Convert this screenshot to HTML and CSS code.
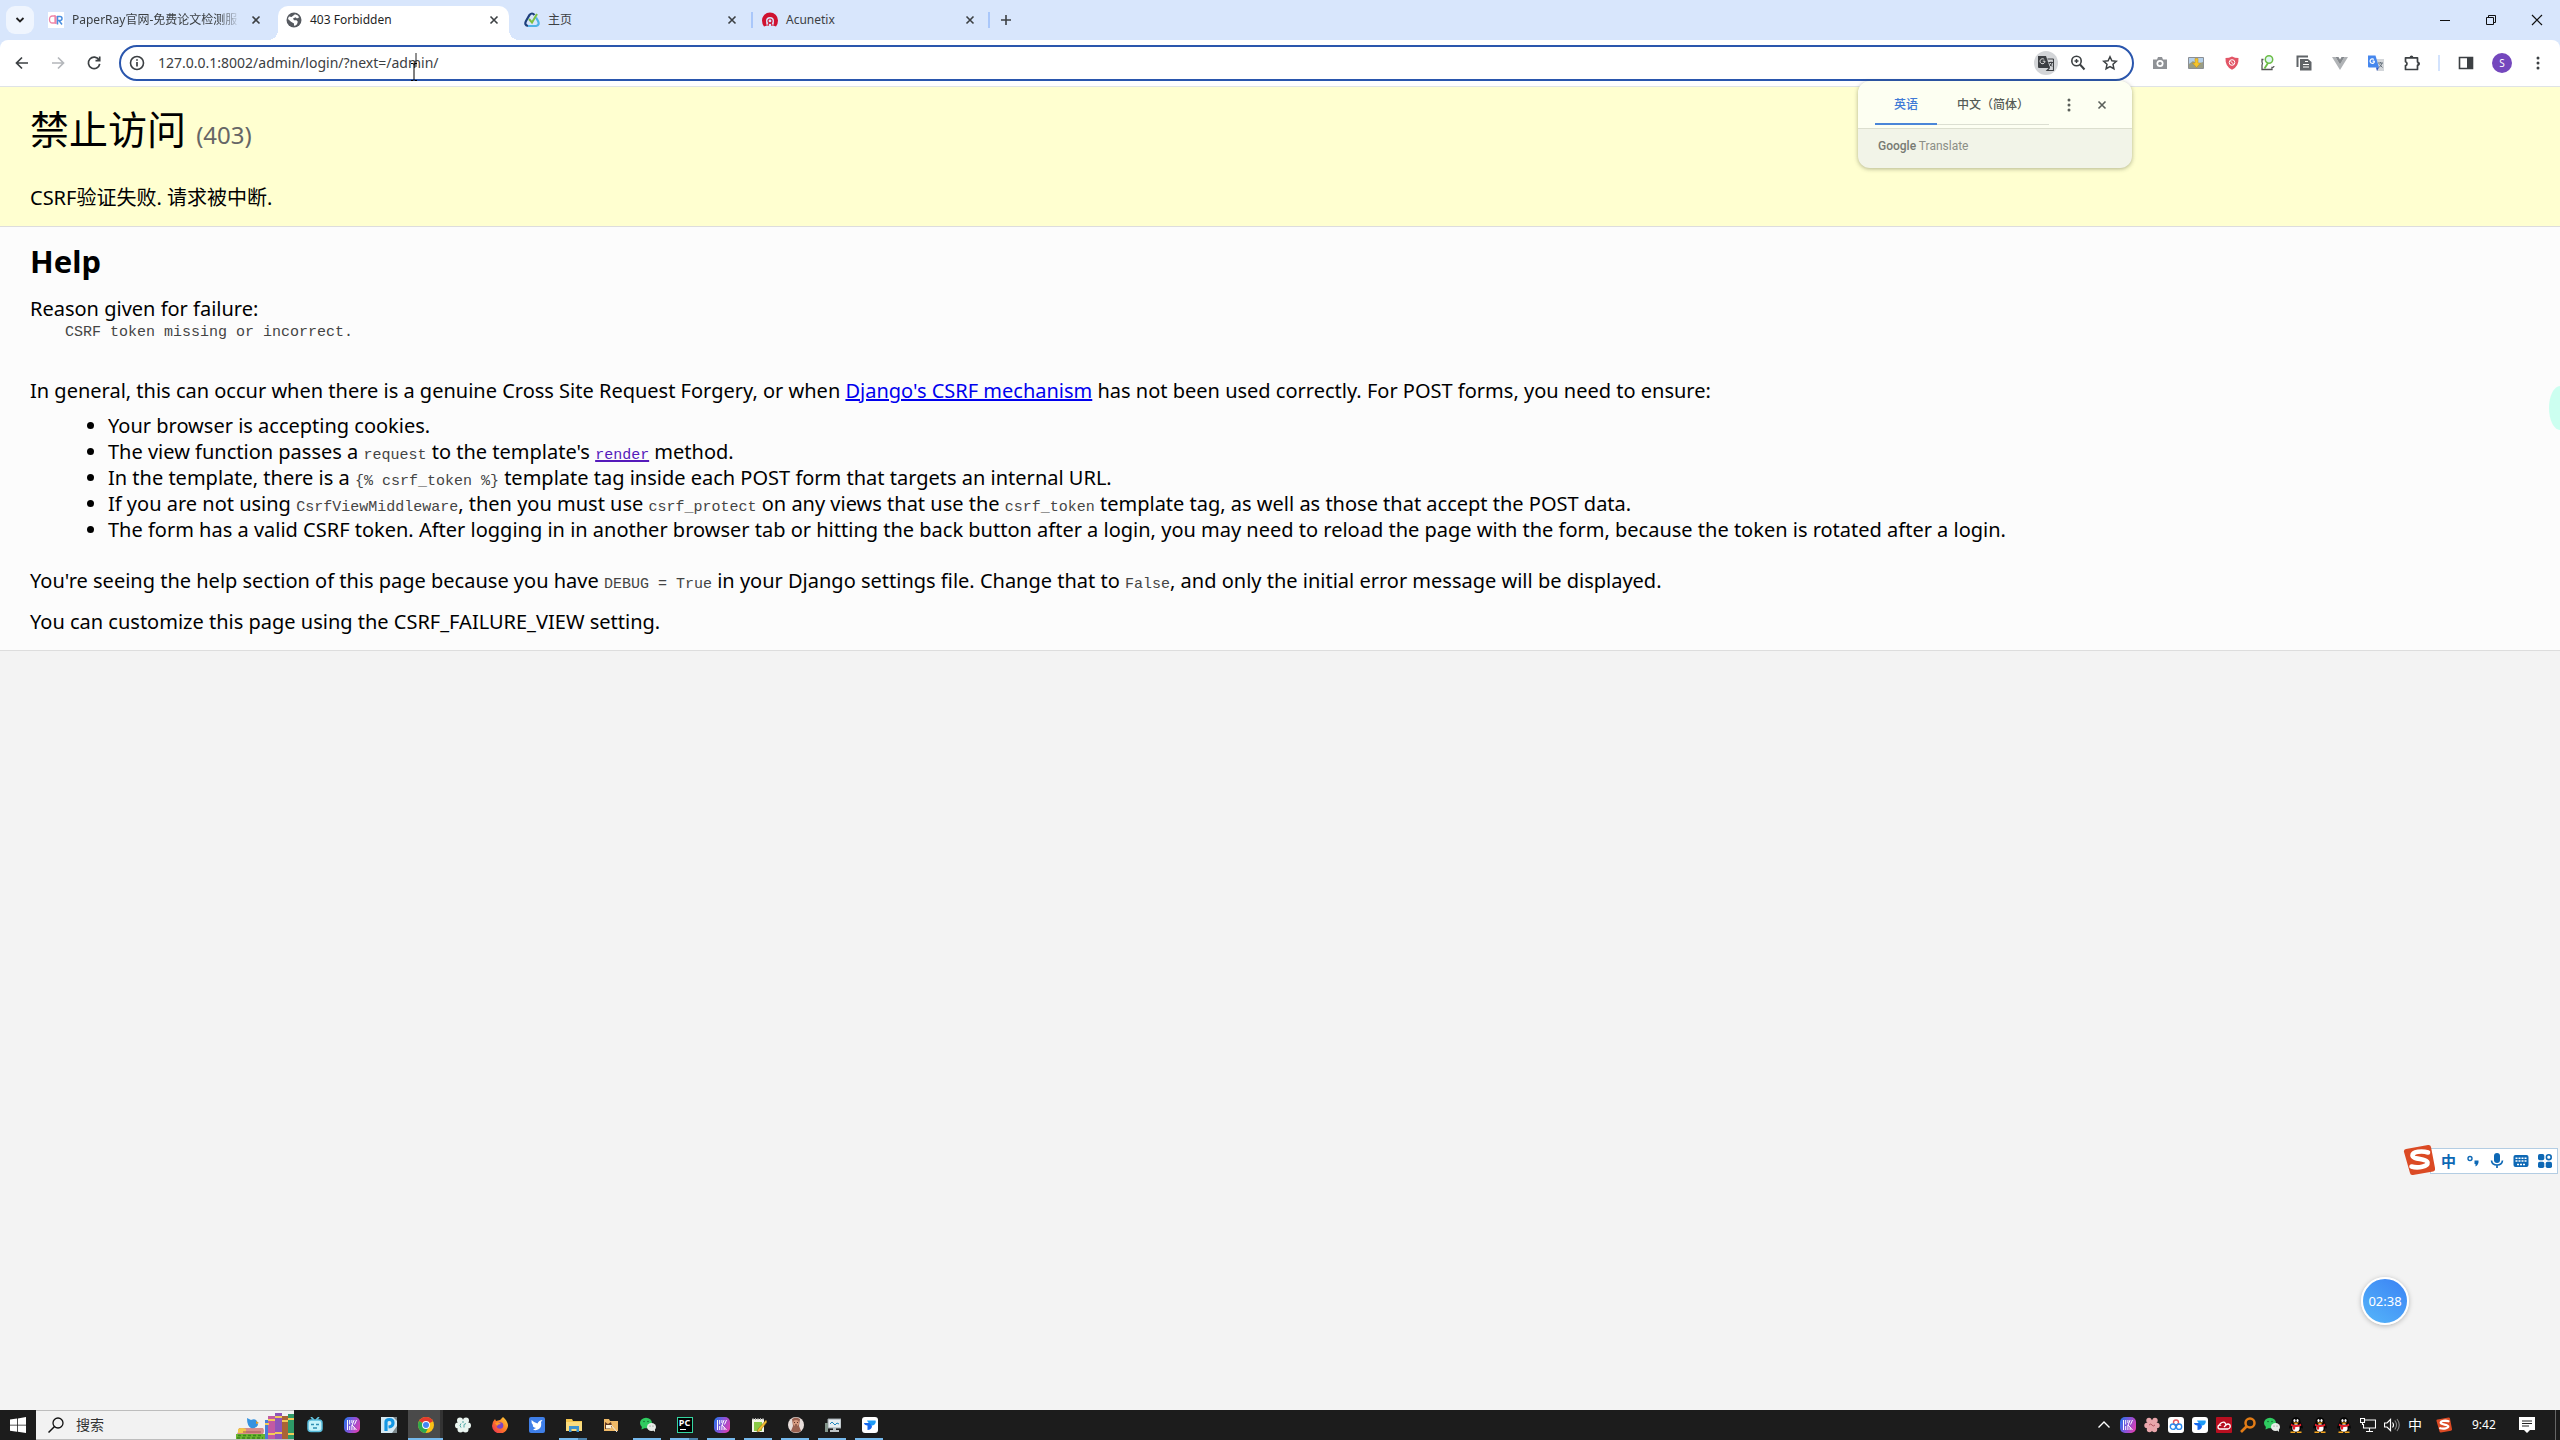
FILE: index.html
```html
<!DOCTYPE html>
<html lang="zh-CN">
<head>
<meta charset="utf-8">
<title>403 Forbidden</title>
<link rel="stylesheet" href="styles.css">
</head>
<body>
<svg class="defs" width="0" height="0" aria-hidden="true">
  <defs>
    <linearGradient id="violet" x1="0" y1=".3" x2="1" y2=".7"><stop offset="0" stop-color="#2f6fe8"/><stop offset=".5" stop-color="#8a52d8"/><stop offset="1" stop-color="#e03fb0"/></linearGradient>
    <linearGradient id="fire" x1="1" y1="0" x2="0" y2="1"><stop offset="0" stop-color="#ffd93b"/><stop offset=".5" stop-color="#ff7a26"/><stop offset="1" stop-color="#e8265a"/></linearGradient>
  </defs>
  <symbol id="i-close" viewBox="0 0 16 16"><path d="M4.500 4.500l7 7M11.500 4.500l-7 7" stroke="currentColor" stroke-width="1.600" fill="none"/></symbol>
  <symbol id="i-dots" viewBox="0 0 16 16"><circle cx="8" cy="3" r="1.500"/><circle cx="8" cy="8" r="1.500"/><circle cx="8" cy="13" r="1.500"/></symbol>
  <symbol id="i-keys" viewBox="0 0 16 16"><rect width="16" height="16" rx="5" fill="url(#violet)"/><path d="M3.500 3v10M5.700 3v4.500M5.700 9v4M7.900 3v3M7.900 8v5M10.100 3l-2 5 4.400 5M12.500 3l-2 4.500M10.100 10.500V13" stroke="#fff" stroke-width="1" fill="none"/></symbol>
  <symbol id="i-wechat" viewBox="0 0 16 16"><ellipse cx="6" cy="6" rx="6" ry="5.200" fill="#2fcb60"/><path d="M2 9l-.5 3.500L5 11z" fill="#2fcb60"/><circle cx="4" cy="4.500" r=".8" fill="#156b33"/><circle cx="8" cy="4.500" r=".8" fill="#156b33"/><ellipse cx="11.500" cy="10" rx="4.500" ry="4" fill="#e8ece8"/><path d="M13 13l2 2v-3z" fill="#e8ece8"/><circle cx="10" cy="9" r=".6" fill="#777"/><circle cx="13" cy="9" r=".6" fill="#777"/></symbol>
  <symbol id="i-todesk" viewBox="0 0 16 16"><rect width="16" height="16" rx="3" fill="#fff"/><path d="M5 3.500h8.500c1 2-1 5-3 5H8c0-2-2-2.500-3-5z" fill="#1d9bf5"/><path d="M2 6h5.500L10 9c0 2.500-2 4-4.500 4V8.500C3.500 8.500 2 7.500 2 6z" fill="#1468f0"/></symbol>
  <symbol id="i-qq" viewBox="0 0 16 16"><path d="M8 0C5 0 3.500 2.200 3.500 5 2.500 7 1 9 1.200 11c.2 1 1 .5 1.500-.4C3 14 5 15.500 8 15.500s5-1.500 5.300-4.900c.5.900 1.300 1.400 1.500.4C15 9 13.500 7 12.500 5c0-2.800-1.500-5-4.500-5z" fill="#050505"/><ellipse cx="8" cy="11" rx="3.600" ry="3.800" fill="#fff"/><ellipse cx="6.500" cy="3.500" rx="1.100" ry="1.500" fill="#fff"/><ellipse cx="9.500" cy="3.500" rx="1.100" ry="1.500" fill="#fff"/><path d="M5 5.500h6L9 7H7z" fill="#f7a51d"/><path d="M3 6.500c3 2 7 2 10 0l.3 2.300c-2 1-4 1.400-6 1.200L7 12.500H5V9.500l-2.200-.8z" fill="#e0202c"/><path d="M2.500 14.500h4.700v1.500H2.500zM8.800 14.500h4.700v1.500H8.800z" fill="#f7a51d"/></symbol>
  <symbol id="i-sogou" viewBox="0 0 32 32"><path d="M3 5L25 1q2.500-.4 3 2l4 21q.5 3-2 3.600L10 31q-2.500.5-3-2L1 8q-.6-2.500 2-3z" fill="#db4a24"/><path d="M25 8.500C19 6.500 9.500 7.500 9.500 11.500s14.500 3 15 7S15 24.500 8.500 22.500" fill="none" stroke="#fff" stroke-width="4.600" stroke-linecap="round"/></symbol>
</svg>

<header class="browser">
  <div class="tabstrip">
    <button class="tab-search" aria-label="搜索标签页"><svg width="12" height="12" viewBox="0 0 12 12"><path d="M2.500 4l3.500 3.500L9.500 4" fill="none" stroke="#222" stroke-width="1.800"/></svg></button>
    <div class="tabs" role="tablist">
      <div class="tab" role="tab">
        <svg class="icon" viewBox="0 0 16 16"><rect width="16" height="16" fill="#fff"/><path d="M7 4H4.500Q1.500 4 1.500 7.500T4.500 11H7V3M8 4v8" fill="none" stroke="#ef86a8" stroke-width="1.300"/><path d="M9 4.500h3q2 0 2 2t-2 2H9.500M11 8.500l3 4M9.500 4v8.500" fill="none" stroke="#4a8fe0" stroke-width="1.500"/></svg>
        <span class="tab-title fade">PaperRay官网-免费论文检测服</span>
        <button class="tab-close" aria-label="关闭"><svg class="icon"><use href="#i-close"/></svg></button>
      </div>
      <div class="tab active" role="tab" aria-selected="true">
        <svg class="icon" viewBox="0 0 16 16"><circle cx="8" cy="8" r="7.500" fill="#565a60"/><path d="M9 2.200q3 .6 4.200 3L11 6.500 9.500 5.200 7 6.500 8 8.200h2.500l1.300 1.500L11 12.200q-1.500 1.500-3 1.600v-2.300L5 9.700 2 7q.3-1.500 1-2.500L5.500 5z" fill="#fff"/></svg>
        <span class="tab-title">403 Forbidden</span>
        <button class="tab-close" aria-label="关闭"><svg class="icon"><use href="#i-close"/></svg></button>
      </div>
      <div class="tab" role="tab">
        <svg class="icon" viewBox="0 0 16 16"><path d="M10.500 3Q8 0 5.500 3L2 9q-2 4 2 5" fill="none" stroke="#1d3f7c" stroke-width="2.200"/><path d="M4 14h8q4-1 2-5l-2-3.500" fill="none" stroke="#4fb3e8" stroke-width="2.200"/><path d="M5 7l3 3.500L13 2" fill="none" stroke="#7cc142" stroke-width="2"/></svg>
        <span class="tab-title">主页</span>
        <button class="tab-close" aria-label="关闭"><svg class="icon"><use href="#i-close"/></svg></button>
      </div>
      <div class="tab ruled" role="tab">
        <svg class="icon" viewBox="0 0 16 16"><path d="M2 14.500Q0 12 0 8.500a8 8 0 0 1 16 0Q16 12 14 14.500L11 13.500q1-1.500 1-4.500a4 4 0 0 0-8 0q0 3 1 4.500z" fill="#cf1230"/><circle cx="8" cy="9" r="2" fill="none" stroke="#cf1230" stroke-width="1.200"/><path d="M6 14q0-3 2-3t2 3" fill="none" stroke="#cf1230" stroke-width="1.200"/></svg>
        <span class="tab-title">Acunetix</span>
        <button class="tab-close" aria-label="关闭"><svg class="icon"><use href="#i-close"/></svg></button>
      </div>
    </div>
    <button class="tab-new" aria-label="新标签页"><svg class="icon" viewBox="0 0 16 16"><path d="M8 3v10M3 8h10" stroke="#3c4043" stroke-width="1.600"/></svg></button>
    <div class="window-buttons">
      <button aria-label="最小化"><svg class="icon" viewBox="0 0 16 16"><path d="M3 8.500h10" stroke="#111"/></svg></button>
      <button aria-label="还原"><svg class="icon" viewBox="0 0 16 16"><path d="M3.500 5.500h7v7h-7zM5.500 5.500v-2h7v7h-2" fill="none" stroke="#111"/></svg></button>
      <button aria-label="关闭窗口"><svg class="icon" viewBox="0 0 16 16"><path d="M3 3l10 10M13 3L3 13" stroke="#111" stroke-width="1.200"/></svg></button>
    </div>
  </div>

  <div class="toolbar">
    <button class="tool" aria-label="后退"><svg class="icon" viewBox="0 0 16 16"><path d="M14 8H2.500M8 2.500L2.500 8 8 13.500" fill="none" stroke="#3c4043" stroke-width="1.700"/></svg></button>
    <button class="tool" aria-label="前进"><svg class="icon" viewBox="0 0 16 16"><path d="M2 8h11.500M8 2.500L13.500 8 8 13.500" fill="none" stroke="#b4b7bb" stroke-width="1.700"/></svg></button>
    <button class="tool" aria-label="重新加载"><svg class="icon" viewBox="0 0 16 16"><path d="M13 5a5.700 5.700 0 1 0 .7 3.800M13.700 1.500v4.200H9.500" fill="none" stroke="#3c4043" stroke-width="1.700"/></svg></button>
    <form class="address">
      <button class="chip" type="button" aria-label="网站信息"><svg class="icon" viewBox="0 0 16 16"><circle cx="8" cy="8" r="6.500" fill="none" stroke="#3c4043" stroke-width="1.600"/><path d="M8 7v4.500M8 4.200v1.600" stroke="#3c4043" stroke-width="1.700"/></svg></button>
      <input class="url" type="text" aria-label="地址" value="127.0.0.1:8002/admin/login/?next=/admin/">
      <button class="chip" type="button" aria-label="翻译此页"><span class="disc"><svg class="icon" viewBox="0 0 16 16"><path d="M0 1h8l4 12H1q-1 0-1-1z" fill="#3c3f43"/><path d="M7 6.200H4.800M7 6.200a2.500 2.500 0 1 1-.8-1.800" fill="none" stroke="#ddd" stroke-width="1"/><path d="M9.500 4H15q.5 0 .5.500V15q0 .5-.5.500H9L11.500 13" fill="none" stroke="#3c3f43" stroke-width="1.200"/><path d="M10.500 7.500H15M13 6.500v1M14 7.500Q13.500 10 11.500 11.500M11.500 8.500l2.500 3" fill="none" stroke="#3c3f43"/></svg></span></button>
      <button class="chip" type="button" aria-label="缩放"><svg class="icon" viewBox="0 0 16 16"><circle cx="6.500" cy="6" r="4.700" fill="none" stroke="#3c4043" stroke-width="1.600"/><path d="M10 9.500l4.500 5" stroke="#3c4043" stroke-width="2"/><path d="M6.500 4v4M4.500 6h4" stroke="#3c4043" stroke-width="1.400"/></svg></button>
      <button class="chip" type="button" aria-label="收藏"><svg class="icon" viewBox="0 0 16 16"><path d="M8 1.800l1.900 4 4.400.5-3.300 3 .9 4.400L8 11.500l-3.900 2.200.9-4.400-3.300-3 4.400-.5z" fill="none" stroke="#3c4043" stroke-width="1.500"/></svg></button>
    </form>
    <button class="tool" aria-label="截图"><svg class="icon" viewBox="0 0 16 16"><path d="M1 4.500h4L6 2h4l1 2.500h4V14H1z" fill="#8f9296"/><circle cx="8" cy="8.500" r="3.500" fill="#fff"/><circle cx="8" cy="8.500" r="1.800" fill="#8f9296"/></svg></button>
    <button class="tool" aria-label="图片下载"><svg class="icon" viewBox="0 0 16 16"><path d="M.5 2.500h15v11H.5z" fill="#b5d0ea" stroke="#8b8f94"/><path d="M1 9l4-3 4 3 6-2v6H1z" fill="#9a9d84"/><path d="M7 3.500h3V8h2.500l-4 4.500L4.500 8H7z" fill="#f5c52c" stroke="#c08a10" stroke-width=".5"/></svg></button>
    <button class="tool" aria-label="安全防护"><svg class="icon" viewBox="0 0 16 16"><path d="M8 1.500q3 1.500 6.500 1.500.5 8.500-6.500 11.800Q1 11.500 1.500 3 5 3 8 1.500z" fill="#e25566"/><circle cx="8" cy="7.500" r="2.800" fill="none" stroke="#fff"/><path d="M6.200 5.800l3.600 3.600" stroke="#fff"/></svg></button>
    <button class="tool" aria-label="脚本"><svg class="icon" viewBox="0 0 16 16"><path d="M3.500 4.500H2V7Q3 8.500 2 10v4.500h10v-2q2 0 2-1.500" fill="none" stroke="#555" stroke-width="1.300"/><circle cx="9" cy="4.500" r="3.700" fill="#dff5f2" stroke="#6cbd45" stroke-width="1.500"/><path d="M8 8L4.500 13.500" stroke="#6cbd45" stroke-width="1.800"/></svg></button>
    <button class="tool" aria-label="阅读"><svg class="icon" viewBox="0 0 16 16"><path d="M1.500 12V1.500H12" fill="none" stroke="#606468" stroke-width="2"/><path d="M4 4h8l3.500 3v8.500H4z" fill="#606468"/><path d="M9 6.500h3M7 9.500h6M7 12h6" stroke="#fff"/></svg></button>
    <button class="tool" aria-label="Vue"><svg class="icon" viewBox="0 0 16 16"><path d="M0 2h3.500L8 9.500 12.500 2H16L8 15z" fill="#b0b3b6"/><path d="M3.500 2h3L8 4.500 9.500 2h3L8 9.500z" fill="#85898d"/></svg></button>
    <button class="tool" aria-label="谷歌翻译"><svg class="icon" viewBox="0 0 16 16"><path d="M7 4h9v12H9z" fill="#d3d6da"/><path d="M0 .5h7.500L11 12.500H1q-1 0-1-1z" fill="#4687ee"/><path d="M6.500 6.200H4.600M6.500 6.200a2.200 2.200 0 1 1-.7-1.700" fill="none" stroke="#fff" stroke-width="1.200"/><path d="M10 8h5M12.500 7v1M14 8q-1 3-3 4.500M11.500 9.500l3 3" fill="none" stroke="#67727c"/><path d="M8 12.500h3L9 16z" fill="#2a56c6"/></svg></button>
    <button class="tool" aria-label="扩展程序"><svg class="icon" viewBox="0 0 16 16"><path d="M1.500 2.800h12V7q1.500.2 1.500 1.700t-1.500 1.600v4.200h-12v-3.900q1.500-.5 1.500-1.900T1.500 6.800z" fill="none" stroke="#3c4043" stroke-width="1.700" stroke-linejoin="round"/><path d="M5.500 2.500q.3-2 2-2t2 2zM13.500 7q2.300 0 2.300 1.700t-2.300 1.600z" fill="#3c4043"/></svg></button>
    <span class="rule"></span>
    <button class="tool" aria-label="侧边栏"><svg class="icon" viewBox="0 0 16 16"><path d="M1.500 2.500h13v11h-13z" fill="none" stroke="#3c4043" stroke-width="1.600"/><path d="M9 2h6v12H9z" fill="#3c4043"/></svg></button>
    <button class="tool" aria-label="账户"><span class="avatar">S</span></button>
    <button class="tool" aria-label="菜单"><svg class="icon dark"><use href="#i-dots"/></svg></button>
  </div>
  <svg class="pointer" width="12" height="28" viewBox="0 0 12 28"><path d="M8 0v14" stroke="#222"/><path d="M6 10v16M3 27.500h2l1-1 1 1h2M3 10.500h2l1 1 1-1h2" fill="none" stroke="#000"/></svg>

  <aside class="translate">
    <div class="translate-bar">
      <div class="langs">
        <button class="lang on">英语</button>
        <button class="lang">中文（简体）</button>
      </div>
      <button class="mini" aria-label="选项"><svg class="icon"><use href="#i-dots"/></svg></button>
      <button class="mini" aria-label="关闭"><svg class="icon"><use href="#i-close"/></svg></button>
    </div>
    <p class="brand"><b>Google</b> Translate</p>
  </aside>
</header>

<main class="page">
  <section class="summary">
    <h1>禁止访问 <span>(403)</span></h1>
    <p>CSRF验证失败. 请求被中断.</p>
  </section>
  <section class="info">
    <h2>Help</h2>
    <p>Reason given for failure:</p>
    <pre>CSRF token missing or incorrect.</pre>
    <p>In general, this can occur when there is a genuine Cross Site Request Forgery, or when <a href="#csrf">Django's CSRF mechanism</a> has not been used correctly. For POST forms, you need to ensure:</p>
    <ul>
      <li>Your browser is accepting cookies.</li>
      <li>The view function passes a <code>request</code> to the template's <a class="seen" href="#render"><code>render</code></a> method.</li>
      <li>In the template, there is a <code>{% csrf_token %}</code> template tag inside each POST form that targets an internal URL.</li>
      <li>If you are not using <code>CsrfViewMiddleware</code>, then you must use <code>csrf_protect</code> on any views that use the <code>csrf_token</code> template tag, as well as those that accept the POST data.</li>
      <li>The form has a valid CSRF token. After logging in in another browser tab or hitting the back button after a login, you may need to reload the page with the form, because the token is rotated after a login.</li>
    </ul>
    <p class="debug">You're seeing the help section of this page because you have <code>DEBUG = True</code> in your Django settings file. Change that to <code>False</code>, and only the initial error message will be displayed.</p>
    <p class="custom">You can customize this page using the CSRF_FAILURE_VIEW setting.</p>
  </section>
</main>

<div class="side-bubble"></div>
<div class="ime">
  <svg class="ime-logo" width="32" height="32"><use href="#i-sogou"/></svg>
  <span class="ime-mode">中</span>
  <svg class="icon" viewBox="0 0 16 16"><circle cx="5" cy="5.500" r="2" fill="none" stroke="#0d68b5" stroke-width="1.400"/><path d="M9.500 7.500h4q.5 4-3 6v-2.500h-1z" fill="#0d68b5"/></svg>
  <svg class="icon" viewBox="0 0 16 16"><rect x="5" y="0" width="6" height="10" rx="3" fill="#0d68b5"/><path d="M2.500 7.500q.5 4.500 5.500 4.500t5.500-4.500M8 12v3" fill="none" stroke="#0d68b5" stroke-width="1.700"/></svg>
  <svg class="icon" viewBox="0 0 16 16"><rect x=".5" y="2" width="15" height="12" rx="2" fill="#0d68b5"/><path d="M2.500 5.200h11M2.500 8h11M4 11.500h8" stroke="#fff" stroke-width="1.500" stroke-dasharray="2 1"/></svg>
  <svg class="icon" viewBox="0 0 16 16"><rect x="1" y="1" width="6.300" height="6.300" rx="1.800" fill="#0d68b5"/><rect x="1" y="8.700" width="6.300" height="6.300" rx="1.800" fill="#0d68b5"/><rect x="8.700" y="8.700" width="6.300" height="6.300" rx="1.800" fill="#0d68b5"/><circle cx="11.800" cy="4.200" r="2.400" fill="none" stroke="#0d68b5" stroke-width="1.600"/></svg>
</div>
<div class="timer">02:38</div>

<footer class="taskbar">
  <button class="start" aria-label="开始"><svg class="icon" viewBox="0 0 16 16"><path d="M0 2.500L7 1.500v6.200H0zM7.800 1.400L16 0v7.700H7.800zM0 8.500h7v6.200l-7-1zM7.800 8.500H16V16l-8.200-1.200z" fill="#fff"/></svg></button>
  <label class="search">
    <svg class="icon" viewBox="0 0 16 16"><circle cx="10" cy="6" r="5" fill="none" stroke="#111" stroke-width="1.300"/><path d="M6.500 9.500L.5 15.500" stroke="#111" stroke-width="1.500"/></svg>
    <input type="text" placeholder="搜索">
    <svg class="books" width="58" height="26" viewBox="0 0 58 26"><rect x="0" y="21" width="29" height="5" fill="#69b52d"/><path d="M2 22.500h24M1 25h26" stroke="#3c8420" stroke-width="1.500" stroke-dasharray="3 2"/><path d="M3 15h24q2 3 0 6H1q2-3 2-6z" fill="#d88d8b"/><path d="M2 16q4-2 8 0v4H2z" fill="#f2c84b"/><path d="M7 19h18" stroke="#a65358"/><path d="M11 5l4 2q4-2 6 1l1 4q-2 4-7 3-4-2-4-10z" fill="#3592df"/><path d="M20 8l3 2-3 1z" fill="#e39b25"/><rect x="29" y="7" width="4" height="19" fill="#477ed8"/><rect x="32" y="3" width="7" height="23" fill="#c35aa2"/><rect x="39" y="0" width="7" height="26" fill="#8e55ba"/><rect x="46" y="3" width="6" height="23" fill="#aa6435"/><rect x="52" y="1" width="6" height="25" fill="#2e9a68"/><path d="M29 11h4M32 7h7M39 4h7M39 20h7M46 8h6M52 6h6M32 21h7M52 21h6" stroke="#f3ca57" stroke-width="2"/></svg>
  </label>
  <nav class="apps">
    <button class="app" aria-label="哔哩哔哩"><svg class="icon" viewBox="0 0 16 16"><path d="M4 0l3 3M12 0L9 3" stroke="#67c9e5" stroke-width="1.600"/><rect x="1" y="3" width="14" height="11.500" rx="3" fill="#c5f3fb" stroke="#58bcdb" stroke-width="1.500"/><path d="M4 7.500h3M9 7.500h3M6 11h4" stroke="#318fb3" stroke-width="1.500"/></svg></button>
    <button class="app" aria-label="按键"><svg class="icon"><use href="#i-keys"/></svg></button>
    <button class="app" aria-label="PicPick"><svg class="icon" viewBox="0 0 16 16"><rect width="16" height="16" fill="#d6e9f2"/><path d="M11 16h5V9zM12 0h4v4z" fill="#7b878b"/><path d="M5 14V5q0-2.500 3.500-2.500t3.500 3.500-4.500 4" fill="none" stroke="#1497e4" stroke-width="3.200"/></svg></button>
    <button class="app open current" aria-label="Chrome"><svg class="icon" viewBox="0 0 16 16"><circle cx="8" cy="8" r="8" fill="#fbc116"/><path d="M8 8L1.100 4A8 8 0 0 1 15 4.200z" fill="#e33b2e"/><path d="M8 8L1.100 4A8 8 0 0 0 7.500 16L11 9.500z" fill="#2da94f"/><circle cx="8" cy="8" r="3.900" fill="#fff"/><circle cx="8" cy="8" r="3" fill="#4285f4"/></svg></button>
    <button class="app" aria-label="助手"><svg class="icon" viewBox="0 0 16 16"><g fill="#eaf5f0"><circle cx="8" cy="8" r="5"/><circle cx="5" cy="3.500" r="3"/><circle cx="11" cy="3.500" r="3"/><circle cx="13" cy="8.500" r="3"/><circle cx="3" cy="8.500" r="3"/><circle cx="5.500" cy="12.500" r="3"/><circle cx="10.500" cy="12.500" r="3"/></g><path d="M6 6.500q-2 2 0 4M11 6.500q-3 0-2 4M8 4v2" fill="none" stroke="#51a9a6"/></svg></button>
    <button class="app" aria-label="Firefox"><svg class="icon" viewBox="0 0 16 16"><path d="M3 2l1 2 4-1 3-3q4 3 5 8a8 8 0 0 1-16 1Q0 5 3 2z" fill="url(#fire)"/><circle cx="8" cy="8.500" r="3.300" fill="#7b45c8"/><path d="M3 6q4-2 6 1-3 0-4 2z" fill="#ff9a2a"/></svg></button>
    <button class="app" aria-label="飞鸟"><svg class="icon" viewBox="0 0 16 16"><rect width="16" height="16" rx="2" fill="#3f7fe8"/><path d="M2.500 3q3 3 6 3.500Q10 3 13.500 3L12 5q1 5-2 7-3 2-6 .5l3-1.500Q3 10 4 8q-2-2-1.500-5z" fill="#fff"/></svg></button>
    <button class="app open more" aria-label="文件资源管理器"><svg class="icon" viewBox="0 0 16 16"><path d="M0 2h6l1 2h9v10H0z" fill="#f5c64f"/><path d="M0 5h16v9H0z" fill="#fbdc7e"/><path d="M3 9h10v6h-2.500v-3h-5v3H3z" fill="#3f93cf"/></svg></button>
    <button class="app" aria-label="图片"><svg class="icon" viewBox="0 0 16 16"><path d="M1 2h5l1 2h8v10H1z" fill="#f1ba67"/><path d="M2 5l3 2 3-2 1 4-2 3H2z" fill="#603823"/><path d="M3 8h5v3.500H3z" fill="#fff4d8"/><path d="M8 8l6 7" stroke="#eee"/></svg></button>
    <button class="app open" aria-label="微信"><svg class="icon"><use href="#i-wechat"/></svg></button>
    <button class="app open more" aria-label="PyCharm"><span class="pc">PC</span></button>
    <button class="app open" aria-label="按键精灵"><svg class="icon"><use href="#i-keys"/></svg></button>
    <button class="app open" aria-label="记事本"><svg class="icon" viewBox="0 0 16 16"><path d="M1 2h12v13H1z" fill="#f5f7e9"/><path d="M3 5h8v9H3z" fill="#8acb45"/><path d="M2 1v2M4.500 1v2M7 1v2M9.500 1v2M12 1v2" stroke="#aaa"/><path d="M15 3l-8 9-1 3 3-1 7-9z" fill="#f3bd32" stroke="#83611b" stroke-width=".5"/></svg></button>
    <button class="app open" aria-label="头像"><svg class="icon" viewBox="0 0 16 16"><circle cx="8" cy="8" r="8" fill="#e8dedb"/><path d="M4 2q4-3 8 0l-1 7 2 5q-5 3-10 0l2-5z" fill="#9a6251"/><circle cx="8" cy="6" r="3" fill="#d79c81"/><path d="M6 5.500h1M9 5.500h1M7 8h2" stroke="#5a2e26"/></svg></button>
    <button class="app open" aria-label="监视器"><svg class="icon" viewBox="0 0 16 16"><path d="M3 2h13v9H3z" fill="#e7edf0" stroke="#9ba4a9"/><path d="M5 7l2-2 3 3 2-2 2 1" fill="none" stroke="#2286bc"/><path d="M8 11h3v2h3v2H5v-2h3z" fill="#bec4c6"/><path d="M0 6h3v9H0z" fill="#83958b"/></svg></button>
    <button class="app open" aria-label="ToDesk"><svg class="icon"><use href="#i-todesk"/></svg></button>
  </nav>
  <div class="tray">
    <svg class="icon" viewBox="0 0 16 16"><path d="M2.500 10.500L8 5l5.500 5.500" fill="none" stroke="#fff" stroke-width="1.400"/></svg>
    <svg class="icon"><use href="#i-keys"/></svg>
    <svg class="icon" viewBox="0 0 16 16"><g fill="#e9a6ab"><circle cx="8" cy="8" r="5"/><circle cx="5" cy="3.500" r="2.700"/><circle cx="11" cy="3.500" r="2.700"/><circle cx="13" cy="8.500" r="2.700"/><circle cx="3" cy="8.500" r="2.700"/><circle cx="5.500" cy="12.500" r="2.700"/><circle cx="10.500" cy="12.500" r="2.700"/></g><path d="M5 8q2-2 3 0t3 0" fill="none" stroke="#b15761"/></svg>
    <svg class="icon" viewBox="0 0 16 16"><rect width="16" height="16" rx="3" fill="#fff"/><circle cx="8" cy="5.500" r="2.500" fill="none" stroke="#e8585f" stroke-width="1.400"/><circle cx="5" cy="9.700" r="2.700" fill="none" stroke="#2a89ee" stroke-width="1.400"/><circle cx="11" cy="9.700" r="2.700" fill="none" stroke="#2a89ee" stroke-width="1.400"/></svg>
    <svg class="icon"><use href="#i-todesk"/></svg>
    <svg class="icon" viewBox="0 0 16 16"><rect width="16" height="16" rx="1" fill="#b80f20"/><path d="M4 12h8q3-1 2-4-2-2-4 0l-2 2M10 8Q9 4 6 5.500T4 8q-2 0-2 2t2 2" fill="none" stroke="#fff" stroke-width="1.300"/></svg>
    <svg class="icon" viewBox="0 0 16 16"><circle cx="10" cy="6" r="4.500" fill="none" stroke="#e37c16" stroke-width="2.500"/><path d="M6.500 9.500L1 15" stroke="#e37c16" stroke-width="2.600"/></svg>
    <svg class="icon"><use href="#i-wechat"/></svg>
    <svg class="icon"><use href="#i-qq"/></svg>
    <svg class="icon"><use href="#i-qq"/></svg>
    <svg class="icon"><use href="#i-qq"/></svg>
    <svg class="icon" viewBox="0 0 16 16"><path d="M5 3h10.500v8H3.500V7M9.500 11v3M6 14.500h7M.5 1.500h4v4h-4zM2.500 5.500V8" fill="none" stroke="#fff" stroke-width="1.100"/></svg>
    <svg class="icon" viewBox="0 0 16 16"><path d="M.5 6H3l3.500-3.500v11L3 10H.5zM8.500 5.500q2 2.500 0 5" fill="none" stroke="#fff" stroke-width="1.200"/><path d="M10.800 3.500q3.500 4.500 0 9M13 2q4.500 6 0 12" fill="none" stroke="#888" stroke-width="1.100"/></svg>
    <span class="tray-text">中</span>
    <svg class="icon tray-sogou"><use href="#i-sogou"/></svg>
    <time class="clock">9:42</time>
    <svg class="icon" viewBox="0 0 16 16"><path d="M0 0h16v13h-5l-3 3-3-3H0z" fill="#fff"/><path d="M3 4h10M3 6.500h10M3 9h7" stroke="#222"/></svg>
    <span class="desk-edge"></span>
  </div>
</footer>
</body>
</html>
```

FILE: styles.css
```css
* { box-sizing: border-box; }

body {
  margin: 0;
  min-height: 100vh;
  display: flex;
  flex-direction: column;
  background: #f3f3f3;
  color: #000;
  font: 20px/26px "Noto Sans", "Noto Sans CJK SC", sans-serif;
}

button {
  display: flex;
  align-items: center;
  justify-content: center;
  padding: 0;
  border: 0;
  background: none;
  color: #3c4043;
  font: inherit;
}

input { font: inherit; border: 0; outline: 0; background: none; padding: 0; min-width: 0; }
h1, h2, p, pre, ul { margin: 0; }

.defs { position: absolute; }
.icon { width: 16px; height: 16px; flex: none; display: block; fill: currentColor; }

/* Browser frame */
.browser { position: relative; background: #d8e6fc; }

.tabstrip { display: flex; align-items: center; height: 40px; }
.tab-search { width: 28px; height: 28px; margin: 0 3px 0 6px; border-radius: 9px; background: #eff5fe; }
.tabs { display: flex; align-self: stretch; }

.tab {
  position: relative;
  display: flex;
  align-items: center;
  gap: 8px;
  width: 238px;
  padding: 0 11px;
  font-size: 12px;
  line-height: 16px;
  color: #3c4043;
}
.tab > * { position: relative; }
.tab-title { flex: 1; white-space: nowrap; }
.fade { mask-image: linear-gradient(90deg, #000 88%, transparent); }
.tab-close { width: 16px; height: 16px; }
.tab.ruled::before, .tab.ruled::after {
  content: "";
  position: absolute;
  left: 0;
  top: 12px;
  width: 2px;
  height: 16px;
  background: #a9c7fa;
}
.tab.ruled::after { left: auto; right: -1px; }
.tab.active { color: #1f1f1f; }
.tab.active::before {
  content: "";
  position: absolute;
  inset: 6px 4px 0 3px;
  border-radius: 10px 10px 0 0;
  background: #fff;
}
.tab.active::after {
  content: "";
  position: absolute;
  inset: auto -6px 0 -7px;
  height: 10px;
  background:
    radial-gradient(circle at 0 0, transparent 10px, #fff 10px) left / 10px 10px no-repeat,
    radial-gradient(circle at 100% 0, transparent 10px, #fff 10px) right / 10px 10px no-repeat;
}

.tab-new { width: 34px; height: 28px; }
.window-buttons { display: flex; margin-left: auto; }
.window-buttons button { width: 46px; height: 40px; }

.toolbar {
  display: flex;
  align-items: center;
  height: 47px;
  padding: 0 4px;
  border-bottom: 1px solid #dfe3e6;
  border-radius: 8px 8px 0 0;
  background: #fff;
}
.tool { width: 36px; height: 36px; }
.address {
  flex: 1;
  display: flex;
  align-items: center;
  height: 36px;
  margin: 0 8px 0 7px;
  padding-right: 6px;
  border: 2px solid #2a56ad;
  border-radius: 18px;
}
.chip { width: 32px; height: 32px; }
.disc { display: grid; place-items: center; width: 24px; height: 24px; border-radius: 50%; background: #d3d5d8; }
.url { flex: 1; padding-left: 5px; font-size: 14px; line-height: 20px; color: #3c4043; }
.rule { width: 2px; height: 16px; margin: 0 8px; background: #d3e3fd; }
.avatar { width: 20px; height: 20px; border-radius: 50%; background: #7447bd; color: #fff; font-size: 10px; line-height: 20px; }
.dark { color: #3c4043; }
.pointer { position: absolute; left: 408px; top: 53px; }

.translate {
  position: absolute;
  top: 81px;
  right: 428px;
  width: 274px;
  height: 87px;
  border-radius: 12px;
  overflow: hidden;
  background: #f2f4e8;
  box-shadow: 0 1px 4px rgba(60, 64, 40, .4);
}
.translate-bar { display: flex; align-items: center; height: 48px; padding: 0 14px 0 17px; border-bottom: 1px solid #dcdfcf; background: #fdfff2; }
.langs { display: flex; flex: 1; height: 32px; margin: 8px 3px 0 0; border-bottom: 1px solid #dcdfd2; }
.lang { width: 62px; height: 32px; padding-bottom: 6px; border-bottom: 2px solid transparent; font-size: 12px; line-height: 16px; font-weight: 500; color: #555b55; white-space: nowrap; }
.lang + .lang { flex: 1; }
.lang.on { border-color: #4a86d8; color: #3f7ad6; }
.mini { width: 33px; height: 32px; color: #5b605b; }
.brand { padding: 9px 20px; font: 12px/16px Roboto, sans-serif; color: #8b8e86; }
.brand b { font-weight: 500; color: #777a73; }

/* Error page */
.page { flex: 1; }
.summary { padding: 18px 30px 15px; border-bottom: 1px solid #dddddd; background: #ffffd0; }
.summary h1 { margin-bottom: 26px; font-size: 39px; line-height: 48px; font-weight: 400; }
.summary h1 span { font-size: 24px; color: #666; }
.info { padding: 14px 30px 15px; border-bottom: 1px solid #dddddd; background: #fcfcfc; }
.info h2 { margin-bottom: 15px; font-size: 31px; line-height: 40px; }
.info pre { margin: 0 0 34px 35px; line-height: 22px; }
.info pre, .info code { font-family: "Liberation Mono", monospace; font-size: 15px; color: #444; }
.info code { line-height: 16px; }
.info ul { margin: 9px 0 25px; padding-left: 78px; }
.info a { color: #0000ee; }
.info a.seen, .info a.seen code { color: #551abb; }
.custom { margin-top: 15px; }

/* Floating desktop widgets */
.side-bubble { position: absolute; right: 0; top: 386px; width: 11px; height: 44px; border-radius: 11px 0 0 11px / 22px 0 0 22px; background: #ccfff0; }
.ime {
  position: absolute;
  right: 2px;
  bottom: 266px;
  display: flex;
  align-items: center;
  gap: 8px;
  width: 128px;
  height: 26px;
  padding-left: 10px;
  border: 1px solid #b3cde3;
  background: #fff;
}
.ime-logo { position: absolute; left: -28px; top: -5px; }
.ime-mode { width: 16px; font-size: 15px; line-height: 16px; font-weight: 700; color: #0d68b5; }
.timer {
  position: absolute;
  right: 151px;
  bottom: 115px;
  width: 48px;
  height: 48px;
  border: 2px solid #fff;
  border-radius: 50%;
  background: linear-gradient(35deg, #55b6fa, #3b82f4);
  box-shadow: 0 1px 5px rgba(0, 0, 0, .25);
  color: #fff;
  font-size: 13px;
  line-height: 44px;
  text-align: center;
}

/* Taskbar */
.taskbar { display: flex; height: 30px; background: #1c1c1c; color: #fff; }
.start { width: 36px; }
.search { display: flex; align-items: center; width: 258px; padding-left: 12px; gap: 12px; border: solid #bdbdbd; border-width: 1px 0; background: #f2f2f2; }
.search input { flex: 1; font-size: 14px; line-height: 20px; }
.search input::placeholder { color: #333; opacity: 1; }
.books { align-self: flex-end; flex: none; }
.apps { display: flex; margin-left: 2px; }
.app { position: relative; width: 37px; height: 30px; }
.app.current { background: linear-gradient(90deg, transparent 1px, #4a4a4a 1px 33px, #333 33px 36px, transparent 36px); }
.app.open::after { content: ""; position: absolute; left: 4px; bottom: 0; width: 28px; height: 2px; background: #76b9ed; }
.app.more::after { background: linear-gradient(90deg, #76b9ed 19px, #4d83ac 19px); }
.app.current::after { left: 1px; width: 35px; }
.pc { width: 16px; height: 16px; border: 1px solid #35d6a0; background: #000; color: #fff; font-size: 9px; line-height: 9px; font-weight: 700; }
.pc::after { content: ""; display: block; width: 6px; height: 1px; margin: 2px 0 0 2px; background: #fff; }
.tray { display: flex; align-items: center; gap: 8px; margin-left: auto; }
.tray-text { width: 16px; font-size: 14px; line-height: 16px; }
.tray-sogou { margin-left: 4px; }
.clock { width: 40px; margin-right: 11px; padding-left: 12px; font-size: 12px; line-height: 16px; }
.desk-edge { width: 5px; height: 30px; margin-left: 12px; border-left: 1px solid #666; }
```
